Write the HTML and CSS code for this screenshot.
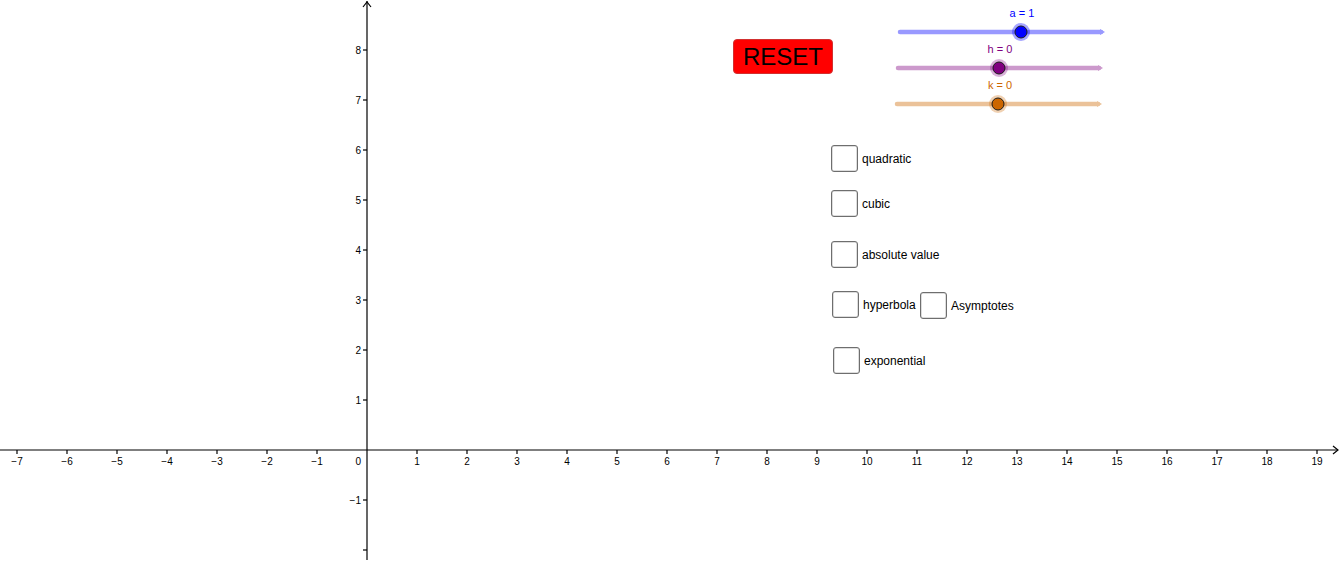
FILE: index.html
```html
<!DOCTYPE html>
<html lang="en">
<head>
    <meta charset="UTF-8">
    <meta name="viewport" content="width=device-width, initial-scale=1.0">
    <title>Parent Functions</title>
    <link rel="stylesheet" href="styles.css">
</head>
<body>
    <div class="applet">
        <svg class="graphics" id="graphics" width="1341" height="562" viewBox="0 0 1341 562">
            <g id="axes" class="axes">
                <line x1="0" y1="450" x2="1338" y2="450"></line>
                <line x1="367" y1="1" x2="367" y2="560"></line>
                <polyline points="1333,446 1338,450 1333,454" fill="none"></polyline>
                <polyline points="363,7 367,2 371,7" fill="none"></polyline>
            </g>
            <g id="ticks" class="ticks"></g>
            <g id="labels" class="tick-labels"></g>

            <!-- sliders -->
            <g class="slider slider-a">
                <line class="track" x1="900" y1="32" x2="1101" y2="32"></line>
                <polygon class="head" points="1100,29 1105,32 1100,35"></polygon>
                <circle class="halo" cx="1021" cy="32" r="9"></circle>
                <circle class="knob" cx="1021" cy="32" r="6"></circle>
                <text class="caption" x="1022" y="17">a = 1</text>
            </g>
            <g class="slider slider-h">
                <line class="track" x1="898" y1="68" x2="1099" y2="68"></line>
                <polygon class="head" points="1098,65 1103,68 1098,71"></polygon>
                <circle class="halo" cx="999" cy="68" r="9"></circle>
                <circle class="knob" cx="999" cy="68" r="6"></circle>
                <text class="caption" x="1000" y="53">h = 0</text>
            </g>
            <g class="slider slider-k">
                <line class="track" x1="897" y1="104" x2="1098" y2="104"></line>
                <polygon class="head" points="1097,101 1102,104 1097,107"></polygon>
                <circle class="halo" cx="998" cy="104" r="9"></circle>
                <circle class="knob" cx="998" cy="104" r="6"></circle>
                <text class="caption" x="1000" y="89">k = 0</text>
            </g>
        </svg>

        <button class="reset-btn">RESET</button>

        <label class="check check-quadratic"><span class="box"></span><span class="text">quadratic</span></label>
        <label class="check check-cubic"><span class="box"></span><span class="text">cubic</span></label>
        <label class="check check-absolute"><span class="box"></span><span class="text">absolute value</span></label>
        <label class="check check-hyperbola"><span class="box"></span><span class="text">hyperbola</span></label>
        <label class="check check-asymptotes"><span class="box"></span><span class="text">Asymptotes</span></label>
        <label class="check check-exponential"><span class="box"></span><span class="text">exponential</span></label>
    </div>

    <script>
        var NS = 'http://www.w3.org/2000/svg';
        var originX = 367, originY = 450, unit = 50;
        var ticks = document.getElementById('ticks');
        var labels = document.getElementById('labels');

        function add(parent, tag, attrs, text) {
            var el = document.createElementNS(NS, tag);
            for (var k in attrs) el.setAttribute(k, attrs[k]);
            if (text !== undefined) el.textContent = text;
            parent.appendChild(el);
        }

        function fmt(n) {
            return n < 0 ? '\u2212' + Math.abs(n) : String(n);
        }

        for (var i = -7; i <= 19; i++) {
            if (i === 0) continue;
            var x = originX + i * unit;
            add(ticks, 'line', { x1: x, y1: originY, x2: x, y2: originY + 4 });
            add(labels, 'text', { x: x, y: originY + 15, 'text-anchor': 'middle' }, fmt(i));
        }

        for (var j = -2; j <= 8; j++) {
            if (j === 0) continue;
            var y = originY - j * unit;
            add(ticks, 'line', { x1: originX - 4, y1: y, x2: originX, y2: y });
            if (j > -2) {
                add(labels, 'text', { x: originX - 6, y: y + 3.5, 'text-anchor': 'end' }, fmt(j));
            }
        }

        add(labels, 'text', { x: originX - 6, y: originY + 15, 'text-anchor': 'end' }, '0');
    </script>
</body>
</html>
```

FILE: styles.css
```css
* {
    box-sizing: border-box;
    margin: 0;
    padding: 0;
}

body {
    background: #fff;
    font-family: 'Liberation Sans', Arial, sans-serif;
    overflow: hidden;
}

.applet {
    position: relative;
    width: 1341px;
    height: 562px;
}

.graphics {
    display: block;
}

.axes line,
.axes polyline,
.ticks line {
    stroke: #000;
    stroke-width: 1.2;
}

.tick-labels text {
    font-size: 10px;
    fill: #000;
}

/* sliders */
.slider .track {
    stroke-width: 4.5;
    stroke-linecap: round;
}

.slider .knob {
    stroke: #1a1a1a;
    stroke-width: 1;
}

.slider .caption {
    font-size: 11px;
    text-anchor: middle;
}

.slider-a .track { stroke: #9999ff; }
.slider-a .head { fill: #9999ff; }
.slider-a .halo { fill: rgba(0, 0, 255, 0.35); }
.slider-a .knob { fill: #0000ff; }
.slider-a .caption { fill: #0000ff; }

.slider-h .track { stroke: #cc99cc; }
.slider-h .head { fill: #cc99cc; }
.slider-h .halo { fill: rgba(128, 0, 128, 0.3); }
.slider-h .knob { fill: #800080; }
.slider-h .caption { fill: #800080; }

.slider-k .track { stroke: #ebc299; }
.slider-k .head { fill: #ebc299; }
.slider-k .halo { fill: rgba(204, 102, 0, 0.3); }
.slider-k .knob { fill: #cc6600; }
.slider-k .caption { fill: #cc6600; }

/* button */
.reset-btn {
    position: absolute;
    left: 733px;
    top: 39px;
    width: 100px;
    height: 35px;
    background: #ff0000;
    border: 1px solid #d23030;
    border-radius: 4px;
    color: #000;
    font-family: 'Liberation Sans', Arial, sans-serif;
    font-size: 24px;
    line-height: 33px;
    text-align: center;
    cursor: pointer;
}

/* checkboxes */
.check {
    position: absolute;
    display: flex;
    align-items: center;
    gap: 4px;
    font-size: 12px;
    color: #000;
    cursor: pointer;
}

.check .box {
    width: 27px;
    height: 27px;
    border: 1px solid #6e6e6e;
    border-radius: 3px;
    background: #fff;
    box-shadow: inset 0 0 0 0.5px #bbb;
}

.check-quadratic { left: 831px; top: 145px; }
.check-cubic { left: 831px; top: 190px; }
.check-absolute { left: 831px; top: 241px; }
.check-hyperbola { left: 832px; top: 291px; }
.check-asymptotes { left: 920px; top: 292px; }
.check-exponential { left: 833px; top: 347px; }
```
